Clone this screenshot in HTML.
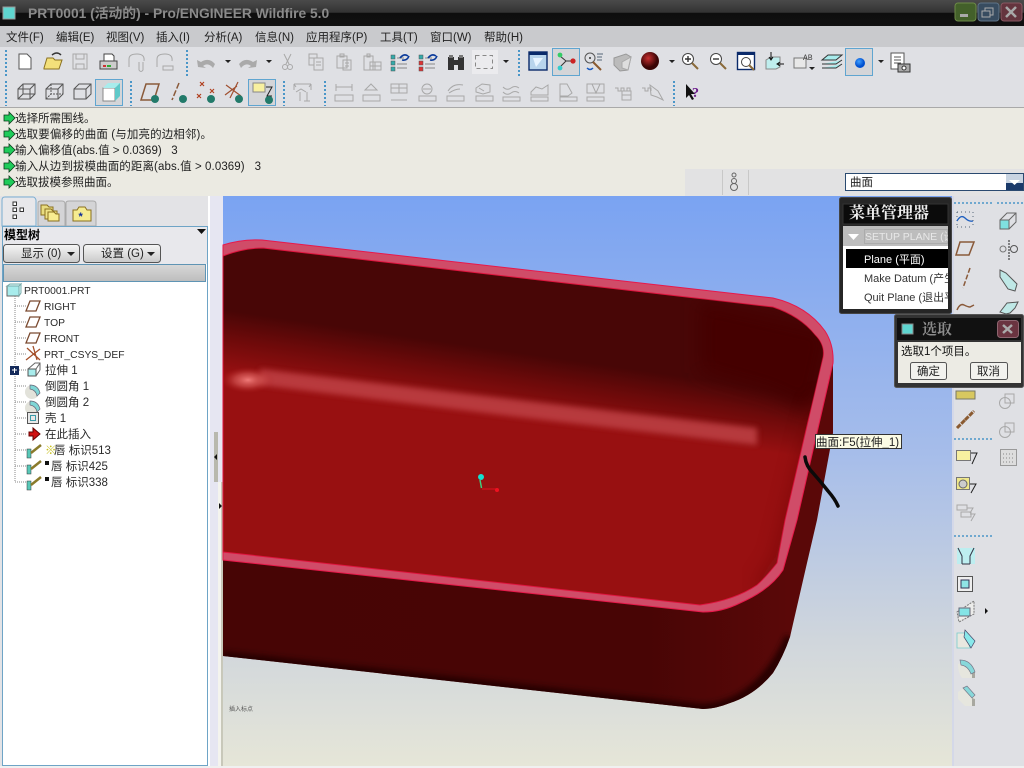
<!DOCTYPE html>
<html><head><meta charset="utf-8"><style>
html,body{margin:0;padding:0;width:1024px;height:768px;overflow:hidden;background:#e0e1e5}
svg{position:absolute;left:0;top:0;display:block}
text{font-family:"Liberation Sans","WenQuanYi Zen Hei","Noto Sans CJK SC",sans-serif;font-size:12px;fill:#111}
.m{font-size:11.5px;fill:#222}
.t{font-size:11.5px;fill:#222}
.l{font-size:11.5px;fill:#2a2a2a}
.la{font-size:10.3px;fill:#2a2a2a}
.i{fill:none;stroke:#555;stroke-width:1}
.g{fill:none;stroke:#a8a8a8;stroke-width:1}
.sep{stroke:#4a96c8;stroke-width:2;stroke-dasharray:2 2}
.sel{fill:#d4d5d8;stroke:#5fa5d0;stroke-width:1}
</style></head><body>
<svg width="1024" height="768" viewBox="0 0 1024 768">
<defs>
<linearGradient id="tb" x1="0" y1="0" x2="0" y2="1"><stop offset="0" stop-color="#4a4a4a"/><stop offset=".48" stop-color="#333"/><stop offset=".5" stop-color="#0e0e0e"/><stop offset="1" stop-color="#111"/></linearGradient>
<linearGradient id="bg" x1="0" y1="0" x2="0" y2="1"><stop offset="0" stop-color="#7aa3f2"/><stop offset=".45" stop-color="#a6bdea"/><stop offset=".78" stop-color="#d0d6dc"/><stop offset="1" stop-color="#e6e6d8"/></linearGradient>
<linearGradient id="cav" gradientUnits="userSpaceOnUse" x1="500" y1="350" x2="491" y2="412"><stop offset="0" stop-color="#480606"/><stop offset=".45" stop-color="#6e0a0a"/><stop offset="1" stop-color="#981011"/></linearGradient>
<linearGradient id="body" gradientUnits="userSpaceOnUse" x1="223" y1="0" x2="790" y2="0"><stop offset="0" stop-color="#470505"/><stop offset=".75" stop-color="#480505"/><stop offset="1" stop-color="#5a0808"/></linearGradient>
<radialGradient id="spot"><stop offset="0" stop-color="#f07a78"/><stop offset=".5" stop-color="#d85a58" stop-opacity=".6"/><stop offset="1" stop-color="#b02020" stop-opacity="0"/></radialGradient>
<linearGradient id="btn" x1="0" y1="0" x2="0" y2="1"><stop offset="0" stop-color="#f6f6f6"/><stop offset="1" stop-color="#c9c9c9"/></linearGradient>
<linearGradient id="sg" x1="0" y1="0" x2="0" y2="1"><stop offset="0" stop-color="#d8d8d8"/><stop offset="1" stop-color="#bdbdbd"/></linearGradient>
<radialGradient id="ball" cx=".4" cy=".35"><stop offset="0" stop-color="#c83030"/><stop offset="1" stop-color="#3a0505"/></radialGradient>
<radialGradient id="blue" cx=".4" cy=".35"><stop offset="0" stop-color="#40a0ff"/><stop offset="1" stop-color="#0050d0"/></radialGradient>
<filter id="b3" x="-20%" y="-20%" width="140%" height="140%"><feGaussianBlur stdDeviation="3"/></filter>
<filter id="b8" x="-30%" y="-30%" width="160%" height="160%"><feGaussianBlur stdDeviation="9"/></filter>
<clipPath id="ci"><path d="M223 256Q243 248 263 248L773 307Q800 316 815 335Q825 345 823 357L785 520L777 563Q765 578 757 585Q735 600 700 605L223 552Z"/></clipPath>
<clipPath id="cb"><path d="M223 245Q242 239 262 240L773 298Q807 306 825 331Q834 345 833 363V433L817 520L807 563L790 637Q783 657 773 673Q755 695 730 703Q715 709 703 709L223 656Z"/></clipPath>
</defs>

<!-- chrome -->
<rect width="1024" height="768" fill="#e0e1e5"/>
<rect width="1024" height="26" fill="url(#tb)"/>
<rect y="26" width="1024" height="21" fill="#c9cacd"/>
<rect y="47" width="1024" height="61" fill="#dfe0e4"/>
<rect y="107" width="1024" height="1" fill="#a9a9a9"/>
<rect y="108" width="1024" height="88" fill="#ebeae2"/>
<rect x="685" y="169" width="339" height="27" fill="#e2e2e3"/>
<rect x="722" y="170" width="1" height="25" fill="#c8c8c8"/>
<rect x="748" y="170" width="1" height="25" fill="#c8c8c8"/>
<g fill="none" stroke="#666"><circle cx="734" cy="175" r="2"/><circle cx="734" cy="181" r="2.5"/><circle cx="734" cy="187" r="3.500"/></g>

<!-- title -->
<rect x="3" y="7" width="12" height="12" fill="#5fd6d0" stroke="#999"/>
<text x="28" y="18" style="font-size:13.8px;font-weight:bold;fill:#8a8a8a">PRT0001 (活动的) - Pro/ENGINEER Wildfire 5.0</text>
<rect x="955" y="3" width="21" height="18" rx="3" fill="#43602a" stroke="#6d8a48"/><rect x="960" y="14" width="8" height="3" fill="#aaa"/>
<rect x="978" y="3" width="21" height="18" rx="3" fill="#384c60" stroke="#5f7488"/><rect x="985" y="8" width="8" height="7" fill="none" stroke="#aaa"/><rect x="982" y="11" width="8" height="6" fill="#384c60" stroke="#aaa"/>
<rect x="1001" y="3" width="21" height="18" rx="3" fill="#64343e" stroke="#885862"/><path d="M1006 7l10 10M1016 7l-10 10" stroke="#a8a8a8" stroke-width="2.500"/>

<!-- menu -->
<text class="m" x="6" y="41">文件(F)</text><text class="m" x="56" y="41">编辑(E)</text><text class="m" x="106" y="41">视图(V)</text><text class="m" x="156" y="41">插入(I)</text><text class="m" x="204" y="41">分析(A)</text><text class="m" x="255" y="41">信息(N)</text><text class="m" x="306" y="41">应用程序(P)</text><text class="m" x="380" y="41">工具(T)</text><text class="m" x="430" y="41">窗口(W)</text><text class="m" x="484" y="41">帮助(H)</text>

<!-- separators -->
<path class="sep" d="M6 50V76M187 50V76M519 50V76M6 81V106M131 81V106M284 81V106M325 81V106M674 81V106"/>
<rect class="sel" x="552.500" y="48.500" width="27" height="27"/>
<rect class="sel" x="845.500" y="48.500" width="27" height="27"/>
<rect class="sel" x="95.500" y="79.500" width="27" height="26"/>
<rect class="sel" x="248.500" y="79.500" width="27" height="26"/>
<rect x="472" y="50" width="26" height="24" fill="#ebebee"/>

<!-- row 1 icons -->
<path d="M19 54h8l4 4v11H19z" fill="#fff" stroke="#555"/>
<path d="M44 68l3-10h6l2 2h7l-3 9H44z" fill="#f3e07a" stroke="#8a7020"/><path d="M52 55q5-4 9 0" fill="none" stroke="#333" stroke-width="1.500"/>
<path class="g" d="M73 54h14v15H73zM76 54v5h8v-5M76 69v-5h8v5"/>
<path d="M100 61h17v8h-17z" fill="#ccc" stroke="#444"/><path d="M104 54h8l2 2v5h-10z" fill="#fff" stroke="#444"/><rect x="103" y="65" width="3" height="2" fill="#c33"/><rect x="107" y="65" width="4" height="2" fill="#3a3"/>
<path class="g" d="M129 67v-8q0-5 8-5t7 7M139 62v8q2 3 4 0v-8"/>
<path class="g" d="M157 67v-8q0-5 8-5t7 7M163 66h10v4h-10z"/>
<path d="M198 67l-1-7 4 2q8-5 14 2l-2 4q-5-6-10-2l3 2z" fill="#aaa"/>
<path d="M225 60l3 3 3-3z M266 60l3 3 3-3z M503 60l3 3 3-3z M669 60l3 3 3-3z M878 60l3 3 3-3z" fill="#222"/>
<path d="M256 67l1-7-4 2q-8-5-14 2l2 4q5-6 10-2l-3 2z" fill="#aaa"/>
<path class="g" d="M284 54l5 10M291 54l-5 10"/><circle class="g" cx="285" cy="67" r="2.500"/><circle class="g" cx="290" cy="67" r="2.500"/>
<path class="g" d="M309 54h8v4h-8zM314 58h9v12h-9zM316 62h5M316 65h5M309 58v7h5"/>
<path class="g" d="M337 56h10v12h-10zM340 54h4v3h-4zM343 60h8v10h-8zM345 63h4M345 66h4"/>
<path class="g" d="M364 56h9v14h-9zM367 54h3v3h-3zM370 62h11v8h-11zM375 62v8M370 66h11"/>
<g fill="#3aa" stroke="#555" stroke-width=".5"><rect x="391" y="55" width="4" height="4"/><rect x="391" y="61" width="4" height="4"/><rect x="391" y="67" width="4" height="4"/></g>
<path d="M397 58h7M397 64h10M397 68h10" stroke="#888"/><path d="M400 58q4-5 8-2M409 56q-2 5-7 4" fill="none" stroke="#0a3a9a" stroke-width="1.600"/>
<g fill="#d33" stroke="#555" stroke-width=".5"><rect x="419" y="55" width="4" height="4" fill="#3aa"/><rect x="419" y="61" width="4" height="4"/><rect x="419" y="67" width="4" height="4"/></g>
<path d="M425 58h7M425 64h10M425 68h10" stroke="#888"/><path d="M428 58q4-5 8-2M437 56q-2 5-7 4" fill="none" stroke="#0a3a9a" stroke-width="1.600"/>
<path d="M448 57h6v13h-6zM458 57h6v13h-6zM454 60h4v5h-4z" fill="#333"/><rect x="449" y="55" width="4" height="3" fill="#777"/><rect x="459" y="55" width="4" height="3" fill="#777"/>
<rect x="475.500" y="55.500" width="17" height="13" fill="none" stroke="#888" stroke-dasharray="4 3"/>
<rect x="529" y="52" width="18" height="18" fill="#b8d4ec" stroke="#0a2a6a" stroke-width="1.400"/><rect x="529" y="52" width="18" height="3" fill="#0a2a6a"/><path d="M533 58l10 0-7 9z" fill="#e8f4ff"/>
<path d="M566 61h8M566 61l-6-5M566 61l-6 6" stroke="#333" fill="none"/><circle cx="573" cy="61" r="2.600" fill="#c22"/><circle cx="560" cy="55" r="2.400" fill="#3c6"/><circle cx="560" cy="68" r="2.400" fill="#3cc"/>
<circle class="i" cx="590" cy="58" r="5"/><circle cx="590" cy="58" r="1" fill="#333"/><path d="M593 62l8 8" stroke="#8a5a30" stroke-width="2"/><path d="M597 54h6M597 57h5M597 60h5" stroke="#567"/><path d="M587 68q3 3 6 0" fill="none" stroke="#1a5ac0" stroke-width="1.500"/>
<path d="M614 58l12-4 5 3-3 13-8 1-6-6z" fill="#bbb" stroke="#999"/><path d="M622 62l9-5-3 13-6-2z" fill="#dedede" stroke="#aaa"/>
<circle cx="650" cy="61" r="9" fill="url(#ball)"/>
<circle cx="688" cy="59" r="5.500" fill="#fff" stroke="#444"/><path d="M685 59h6M688 56v6" stroke="#333" stroke-width="1.400"/><path d="M692 63l6 6" stroke="#8a6a3a" stroke-width="2"/>
<circle cx="716" cy="59" r="5.500" fill="#fff" stroke="#444"/><path d="M713 59h6" stroke="#333" stroke-width="1.400"/><path d="M720 63l6 6" stroke="#8a6a3a" stroke-width="2"/>
<rect x="737.500" y="52.500" width="17" height="17" fill="#fff" stroke="#0a2a6a" stroke-width="1.400"/><rect x="737" y="52" width="18" height="3" fill="#0a2a6a"/><circle cx="746" cy="62" r="4.500" fill="none" stroke="#444"/><path d="M749 65l5 5" stroke="#8a6a3a" stroke-width="2"/>
<path d="M766 60l5-3h9v10l-4 2h-10z" fill="#bfeeee" stroke="#888"/><path d="M771 52v7M769 57l2 3 2-3M784 64h-6M780 62l-3 2 3 2" stroke="#111" fill="none"/>
<path d="M794 58h12v10h-12z" fill="#e8e8e8" stroke="#777"/><text x="803" y="60" style="font-size:8px;fill:#444;font-family:'Liberation Mono'">AB</text><path d="M809 67l3 3 3-3z" fill="#222"/>
<path d="M822 60l6-5h14l-6 5zM822 64h14l6-4M822 68h14l6-4" fill="#a8ecec" stroke="#333"/>
<circle cx="860" cy="63" r="5" fill="url(#blue)"/>
<path d="M891 53h13v16h-13zM894 57h7M894 60h7M894 63h7" fill="#fff" stroke="#555"/><rect x="898" y="64" width="12" height="8" fill="#aaa" stroke="#333"/><circle cx="904" cy="68" r="2" fill="#fff" stroke="#333"/>

<!-- row 2 icons -->
<g class="i"><path d="M18 89h12v10H18zM18 89l5-5h12v10l-5 5M30 89l5-5M23 84v10h12M18 99l5-5"/></g>
<g class="i"><path d="M46 89h12v10H46zM46 89l5-5h12v10l-5 5M58 89l5-5"/><path d="M51 84v10h12M46 99l5-5" stroke-dasharray="2 1"/></g>
<g class="i"><path d="M74 89h12v10H74zM74 89l5-5h12v10l-5 5M86 89l5-5"/></g>
<path d="M103 88h12v13h-12z" fill="#fff" stroke="#888"/><path d="M103 88l5-5h12l-5 5z" fill="#a8ecec"/><path d="M115 88l5-5v13l-5 5z" fill="#5fc9c9"/>
<path d="M146 84h13l-5 16h-13z" fill="none" stroke="#8a5a3a" stroke-width="1.500"/><circle cx="155" cy="99" r="4" fill="#227a6a"/>
<path d="M179 83l-7 17" stroke="#8a5a3a" stroke-width="1.500" stroke-dasharray="6 2"/><circle cx="183" cy="99" r="4" fill="#227a6a"/>
<path d="M200 82l4 4M204 82l-4 4M210 89l4 4M214 89l-4 4M197 94l4 4M201 94l-4 4" stroke="#b04020" stroke-width="1.200"/><circle cx="211" cy="99" r="4" fill="#227a6a"/>
<path d="M226 85l15 11M238 82l-8 16M225 95l12-9" stroke="#a05030" stroke-width="1.200"/><circle cx="239" cy="99" r="4" fill="#227a6a"/>
<rect x="253" y="83" width="12" height="9" fill="#f8f0a0" stroke="#888"/><path d="M266 87h6l-5 9h5" fill="none" stroke="#222"/><circle cx="269" cy="100" r="4" fill="#227a6a"/>
<path class="g" d="M294 84h17M294 84v6M311 84v6M296 87l-2-3M309 87l2-3M296 92l5-3 5 3M300 92v9M304 101h6M307 92v9"/>
<g class="g">
<path d="M336 87h16M336 84v7M352 84v7M335 95h18v6h-18z"/>
<path d="M365 90l6-6 6 6zM363 95h17v6h-17z"/>
<path d="M391 84h16v9h-16zM399 84v9M391 88h16M391 100h16"/>
<circle cx="427" cy="89" r="5"/><path d="M423 89h8M419 96h17v5h-17z"/>
<path d="M448 91q5-8 15-6M449 93q6-4 11-4M447 96h17v5h-17z"/>
<path d="M476 88l6-4 8 1v7l-7 2-7-2zM479 88l5 3M476 96h17v5h-17z"/>
<path d="M503 87q4 4 8 1t8 0M503 92q4 4 8 1t8 0M503 97h17v4h-17z"/>
<path d="M531 92l5-5 6 2 6-4v10h-17zM531 97h17v4h-17z"/>
<path d="M560 84h7l5 9-4 3h-8zM560 97h17v4h-17z"/>
<path d="M587 84h17v9h-17zM592 84l4 9 4-9M587 97h17v4h-17z"/>
<path d="M615 88h3v3h3v-3h3v3h3v-3h3v3M622 91h9v9h-9zM622 95h9"/>
<path d="M642 88h3v3h3v-3h3v3M650 85l8 6 5 9-6-3-6-2z"/>
</g>
<path d="M686 84l0 14 3-3 3 5 2-1-3-5h4z" fill="#111"/>
<text x="692" y="97" style="font-size:14px;font-weight:bold;fill:#6a1a8a;font-family:'Liberation Serif'">?</text>

<!-- messages -->
<g fill="#1fcc5a" stroke="#0a3a1a" stroke-width=".8">
<path d="M4 115h5v-3l6 6-6 6v-3H4z"/>
<path d="M4 131h5v-3l6 6-6 6v-3H4z"/><path d="M4 147h5v-3l6 6-6 6v-3H4z"/><path d="M4 163h5v-3l6 6-6 6v-3H4z"/><path d="M4 179h5v-3l6 6-6 6v-3H4z"/>
</g>
<text class="t" x="15" y="122">选择所需围线。</text>
<text class="t" x="15" y="138" textLength="197">选取要偏移的曲面 (与加亮的边相邻)。</text>
<text class="t" x="15" y="154">输入偏移值(abs.值 &gt; 0.0369)&#160;&#160;&#160;3</text>
<text class="t" x="15" y="170" textLength="246">输入从边到拔模曲面的距离(abs.值 &gt; 0.0369)&#160;&#160;&#160;3</text>
<text class="t" x="15" y="186">选取拔模参照曲面。</text>

<!-- combo -->
<rect x="845.500" y="173.500" width="178" height="17" fill="#fff" stroke="#2a4a70"/>
<text class="t" x="850" y="186">曲面</text>
<rect x="1006" y="174" width="17" height="16" fill="#c8d4e2"/><rect x="1006" y="183" width="17" height="7" fill="#1a3a6a"/><path d="M1009 180h11l-5.500 5z" fill="#fff"/>

<!-- graphics -->
<rect x="223" y="196" width="729" height="571" fill="url(#bg)"/>
<rect x="208" y="196" width="15" height="571" fill="#e6e6f2"/>
<rect x="208" y="196" width="2" height="571" fill="#fff"/>
<rect x="214" y="432" width="4" height="50" fill="#b8b8ae"/>
<rect x="218" y="482" width="5" height="285" fill="#f4f4ee"/><rect x="221" y="482" width="2" height="285" fill="#c8c8ba"/>
<path d="M217 454l-3 3 3 3zM219 503l3 3-3 3z" fill="#111"/>

<!-- model -->
<path d="M223 245Q242 239 262 240L773 298Q807 306 825 331Q834 345 833 363V433L817 520L807 563L790 637Q783 657 773 673Q755 695 730 703Q715 709 703 709L223 656Z" fill="url(#body)"/>
<g clip-path="url(#cb)"><path d="M223 656L703 709Q760 705 790 637" fill="none" stroke="#280202" stroke-width="10" filter="url(#b3)"/></g>
<path d="M223 245Q242 239 262 240L773 298Q807 306 825 331Q834 345 833 363L797 520L783 570Q770 590 740 603Q722 612 703 612L223 560Z" fill="#d04c68" stroke="#e8184a" stroke-width="1"/>
<path d="M223 256Q243 248 263 248L773 307Q800 316 815 335Q825 345 823 357L785 520L777 563Q765 578 757 585Q735 600 700 605L223 552Z" fill="url(#cav)" stroke="#e0143e" stroke-width="1"/>
<g clip-path="url(#ci)">
<path d="M700 300L830 330L812 412L770 392L700 372Z" fill="#440505" filter="url(#b8)"/>
<path d="M820 400L780 560L760 590" fill="none" stroke="#6a0808" stroke-width="14" opacity=".5" filter="url(#b8)"/>
<path d="M260 369L510 399L757 428V445L510 416L260 385Z" fill="#c24448" opacity=".8" filter="url(#b3)"/>
<ellipse cx="248" cy="380" rx="27" ry="13" fill="url(#spot)"/>
</g>
<path d="M480 480l1.500 8" stroke="#3fd080" stroke-width="1.500"/><circle cx="481" cy="477" r="3" fill="#14e0d0"/>
<path d="M482 489h15" stroke="#e01020"/><circle cx="497" cy="490" r="2" fill="#f01020"/>
<path d="M805 457q1 9 8 16 8 9 15 18 7 8 10 15" fill="none" stroke="#0a0a0a" stroke-width="3.500" stroke-linecap="round"/>
<rect x="815.500" y="434.500" width="86" height="14" fill="#fbfbe4" stroke="#333"/>
<text class="t" x="816" y="446">曲面:F5(拉伸_1)</text>
<text x="229" y="711" style="font-size:6px;fill:#555">插入标点</text>

<!-- tree panel -->
<rect x="0" y="196" width="208" height="572" fill="#e3e3e6"/>
<path d="M2 226V200q0-3 3-3h28q2 0 3 3v26z" fill="#e7e7ea" stroke="#7aaed0"/>
<path d="M38 226V203q0-2 3-2h21q3 0 3 3v22z" fill="#d4d4d6" stroke="#aaa"/>
<path d="M66 226V203q0-2 3-2h24q3 0 3 3v22z" fill="#d4d4d6" stroke="#aaa"/>
<g fill="#fff" stroke="#333"><rect x="13" y="202" width="3.500" height="3.500"/><rect x="13" y="208" width="3.500" height="3.500"/><rect x="13" y="215" width="3.500" height="3.500"/><rect x="20" y="208" width="3.500" height="3.500"/></g>
<path d="M41 205h6l2 2h4v8H41z" fill="#e8dc80" stroke="#8a7020"/>
<path d="M45 209h6l2 2h4v8H45z" fill="#f0e488" stroke="#8a7020"/>
<path d="M48 212h6l2 2h3v7H48z" fill="#f8ec90" stroke="#8a7020"/>
<path d="M73 210h4l2-3h6l2 3h4v11H73z" fill="#f5ec90" stroke="#8a7020"/><text x="78.500" y="220" style="font-size:11px;fill:#0a2a9a;font-weight:bold">*</text>
<rect x="2.500" y="226.500" width="205" height="539" fill="#fff" stroke="#6ea4c6"/>
<rect x="3" y="227" width="204" height="37" fill="#e8e8ec"/>
<text x="4" y="239" style="font-weight:bold;font-size:12px;fill:#000">模型树</text>
<path d="M197 229h9l-4.500 5z" fill="#111"/>
<rect x="3.500" y="244.500" width="76" height="18" rx="3" fill="url(#btn)" stroke="#555"/>
<rect x="83.500" y="244.500" width="77" height="18" rx="3" fill="url(#btn)" stroke="#555"/>
<text x="21" y="257" class="t">显示 (0)</text><text x="101" y="257" class="t">设置 (G)</text>
<path d="M67 252h8l-4 4zM147 252h8l-4 4z" fill="#222"/>
<rect x="3.500" y="264.500" width="202" height="17" fill="url(#sg)" stroke="#5f94b4"/>
<rect x="7" y="286" width="12" height="10" fill="#a8ecec" stroke="#666"/><path d="M7 286l3-2h11l-2 2zM19 286l2-2v9l-2 3z" fill="#dff" stroke="#7aa"/>
<path d="M15 296V482M15 306h11M15 322h11M15 338h11M15 354h11M15 370h11M15 386h11M15 402h11M15 418h11M15 434h11M15 450h11M15 466h11M15 482h11" stroke="#888" stroke-dasharray="1 1" fill="none"/>
<g fill="none" stroke="#7b4a30" stroke-width="1.300">
<path d="M30 301h10l-4 10h-10zM30 317h10l-4 10h-10zM30 333h10l-4 10h-10z"/>
<path d="M27 348l13 12M33 346l4 14M26 360l14-11" stroke="#a5502a"/>
</g>
<rect x="10" y="366" width="9" height="9" fill="#142a5a"/><path d="M12 370h5M14.500 368v5" stroke="#fff"/>
<rect x="28" y="369" width="8" height="7" fill="#a8ecec" stroke="#555"/><path d="M28 369l7-6h5v7l-4 6M36 369l4-6" fill="none" stroke="#666"/>
<circle cx="32" cy="392" r="7" fill="#e2e2da"/><path d="M30 385q8 0 10 8l-3 3q-1-6-7-7z" fill="#7fd6d6" stroke="#667" stroke-width=".7"/>
<circle cx="32" cy="408" r="7" fill="#e2e2da"/><path d="M30 401q8 0 10 8l-3 3q-1-6-7-7z" fill="#7fd6d6" stroke="#667" stroke-width=".7"/>
<rect x="27.500" y="412.500" width="11" height="11" fill="#e8e8e8" stroke="#555"/><rect x="30.500" y="415.500" width="5" height="5" fill="none" stroke="#3a9aa8"/>
<path d="M29 432h4v-4l7 6-7 6v-4h-4z" fill="#d01010" stroke="#600"/>
<g fill="#58c8b8" stroke="#333" stroke-width=".5"><rect x="27" y="449" width="4" height="9"/><rect x="27" y="465" width="4" height="9"/><rect x="27" y="481" width="4" height="9"/></g>
<g fill="none" stroke="#8a7a2a" stroke-width="2.500"><path d="M31 453l10-8M31 469l10-8M31 485l10-8"/></g>
<text class="la" x="24" y="294">PRT0001.PRT</text>
<text class="la" x="44" y="310">RIGHT</text><text class="la" x="44" y="326">TOP</text><text class="la" x="44" y="342">FRONT</text><text class="la" x="44" y="358">PRT_CSYS_DEF</text>
<text class="l" x="45" y="374">拉伸 1</text><text class="l" x="45" y="390">倒圆角 1</text><text class="l" x="45" y="406">倒圆角 2</text><text class="l" x="45" y="422">壳 1</text><text class="l" x="45" y="438">在此插入</text>
<text class="l" x="45" y="454" style="fill:#c8c020">※</text><text class="l" x="54" y="454">唇 标识513</text>
<rect x="45" y="461" width="4" height="4" fill="#111"/><text class="l" x="51" y="470">唇 标识425</text>
<rect x="45" y="477" width="4" height="4" fill="#111"/><text class="l" x="51" y="486">唇 标识338</text>

<!-- right toolbar -->
<rect x="952" y="196" width="72" height="572" fill="#dfe0e4"/>
<rect x="952" y="196" width="2" height="572" fill="#d4d8e8"/>
<path class="sep" d="M954 203h40M997 203h27M954 439h39M954 536h39" style="stroke-width:1.500"/>
<path d="M957 212v15M973 212v15M957 212h16M957 227h16" stroke="#567" stroke-dasharray="1 3" fill="none"/><path d="M957 221q4-7 8-3t8 3" fill="none" stroke="#2060c0" stroke-width="1.300"/>
<rect x="1000" y="220" width="9" height="9" fill="#7fe0e0" stroke="#666"/><path d="M1000 220l7-7h9v9l-7 7M1009 220l7-7" fill="none" stroke="#666"/>
<path d="M960 242h14l-5 13h-13z" fill="none" stroke="#8a5a3a" stroke-width="1.500"/>
<path d="M1009 240v20" stroke="#222" stroke-dasharray="2 1"/><circle cx="1003" cy="249" r="3" fill="none" stroke="#777"/><circle cx="1014" cy="249" r="3.500" fill="none" stroke="#555"/>
<path d="M970 268l-7 20" stroke="#8a5a3a" stroke-width="1.500" stroke-dasharray="5 2"/>
<path d="M1000 270l6 3 11 11-2 7-7-2-8-12z" fill="#bfe8e6" stroke="#555"/>
<path d="M957 310q3-7 7-5t6 2l4-2" fill="none" stroke="#8a5a3a" stroke-width="1.500"/>
<path d="M1000 312l7-9 11-1-3 6-5 5-4 1z" fill="#bfe8e6" stroke="#555"/>

<rect x="956" y="391" width="19" height="8" fill="#d8c860" stroke="#776"/>
<path d="M957 428l8-8M965 420l9-9" stroke="#8a5a30" stroke-width="3" fill="none" stroke-dasharray="5 1"/>
<g class="g"><rect x="1005" y="394" width="9" height="9"/><circle cx="1005" cy="403" r="5.500"/><rect x="1005" y="423" width="9" height="9"/><circle cx="1005" cy="432" r="5.500"/></g>
<rect x="1000.500" y="449.500" width="16" height="16" fill="#ddd" stroke="#999"/><path d="M1003 454h11M1003 458h11M1003 462h11" stroke="#888" stroke-dasharray="1 2"/>
<rect x="956.500" y="450.500" width="14" height="10" fill="#f8f0a0" stroke="#777"/><path d="M971 453h6l-5 11" fill="none" stroke="#222"/>
<rect x="956.500" y="477.500" width="13" height="12" fill="#f0e88a" stroke="#777"/><circle cx="963" cy="484" r="4" fill="#ccc" stroke="#666"/><path d="M970 484h6l-5 9" fill="none" stroke="#222"/>
<path class="g" d="M957 505h10v5h-10zM961 512h10v5h-10zM967 508h6l-3 5M970 514h5l-4 7"/>

<path d="M957 548h18v16h-18z" fill="#bdeef0"/><path d="M958 548l4 8v8M974 548l-4 8v8M962 564h8" fill="none" stroke="#334"/>
<rect x="957.500" y="576.500" width="15" height="15" fill="#eee" stroke="#555"/><rect x="961" y="580" width="8" height="8" fill="#8fe4e6" stroke="#335"/>
<path d="M957 612l17-11v13l-15 8z" fill="#ececea" stroke="#777" stroke-dasharray="2 1"/><rect x="959" y="608" width="11" height="8" fill="#84e4e6" stroke="#667"/>
<path d="M985 608l3 3-3 3z" fill="#111"/>
<path d="M957 633h9l4 15h-13z" fill="#e8e8e0" stroke="#7cc" stroke-width=".8"/><path d="M965 630l10 11-4 7-7-11z" fill="#88e8ea" stroke="#446" stroke-width=".7"/>
<path d="M958 664q9-4 17 8v6h-13q-4-5-4-14z" fill="#e6e6de"/><path d="M972 668l3 4v6h-3z" fill="#a8a8a0"/><path d="M960 660q11 0 15 12l-4 2q-3-8-10-9z" fill="#88d8da" stroke="#778" stroke-width=".7"/>
<path d="M958 692l6-4 11 10v8h-10l-7-7z" fill="#e6e6de"/><path d="M972 698l3 1v7h-3z" fill="#a8a8a0"/><path d="M963 688l4-2 8 9-3 3z" fill="#88d8da" stroke="#778" stroke-width=".7"/>

<!-- menu manager -->
<rect x="839.500" y="197.500" width="112" height="116" rx="2" fill="#262626" stroke="#444"/>
<rect x="843" y="204" width="105" height="20" fill="#0b0b0b" stroke="#333"/>
<text x="849" y="218" style="font-size:16px;font-weight:bold;fill:#eee;font-family:'Noto Serif CJK SC',serif">菜单管理器</text>
<rect x="843" y="226" width="105" height="83" fill="#fff"/>
<rect x="843" y="226" width="105" height="20" fill="#bdbdbd"/>
<path d="M848 234h11l-5.500 6z" fill="#fff"/>
<rect x="864.500" y="229.500" width="83" height="14" fill="none" stroke="#999" stroke-dasharray="1 1"/>
<svg x="843" y="226" width="105" height="83" viewBox="843 226 105 83">
<text x="865" y="240" style="font-size:10.500px;fill:#e8e8e8">SETUP PLANE (设置平面)</text>
<rect x="846" y="249" width="102" height="19" fill="#000"/>
<text x="864" y="263" style="font-size:11px;fill:#fff">Plane (平面)</text>
<text x="864" y="282" style="font-size:11px;fill:#333">Make Datum (产生基准)</text>
<text x="864" y="301" style="font-size:11px;fill:#333">Quit Plane (退出平面)</text>
</svg>

<!-- dialog -->
<rect x="894.500" y="314.500" width="129" height="73" rx="2" fill="#333" stroke="#555"/>
<rect x="897" y="318" width="124" height="22" fill="#111"/>
<rect x="902" y="324" width="11" height="10" fill="#5fd6d0" stroke="#888"/>
<text x="922" y="334" style="font-size:15px;font-weight:bold;fill:#8c8c8c;font-family:'Noto Serif CJK SC',serif">选取</text>
<rect x="997.500" y="320.500" width="21" height="17" rx="3" fill="#6a3440" stroke="#8e6570"/><path d="M1003 325l9 8M1012 325l-9 8" stroke="#aaa" stroke-width="2.500"/>
<rect x="898" y="342" width="123" height="41" fill="#ecebe4"/>
<text x="901" y="355" style="font-size:11.500px">选取1个项目。</text>
<rect x="910.500" y="362.500" width="36" height="17" rx="2" fill="#f2f2ee" stroke="#555"/>
<rect x="970.500" y="362.500" width="37" height="17" rx="2" fill="#f2f2ee" stroke="#555"/>
<text x="917" y="375" class="t">确定</text><text x="977" y="375" class="t">取消</text>

<rect y="766" width="1024" height="2" fill="#f0f0f0"/>
</svg>
</body></html>
